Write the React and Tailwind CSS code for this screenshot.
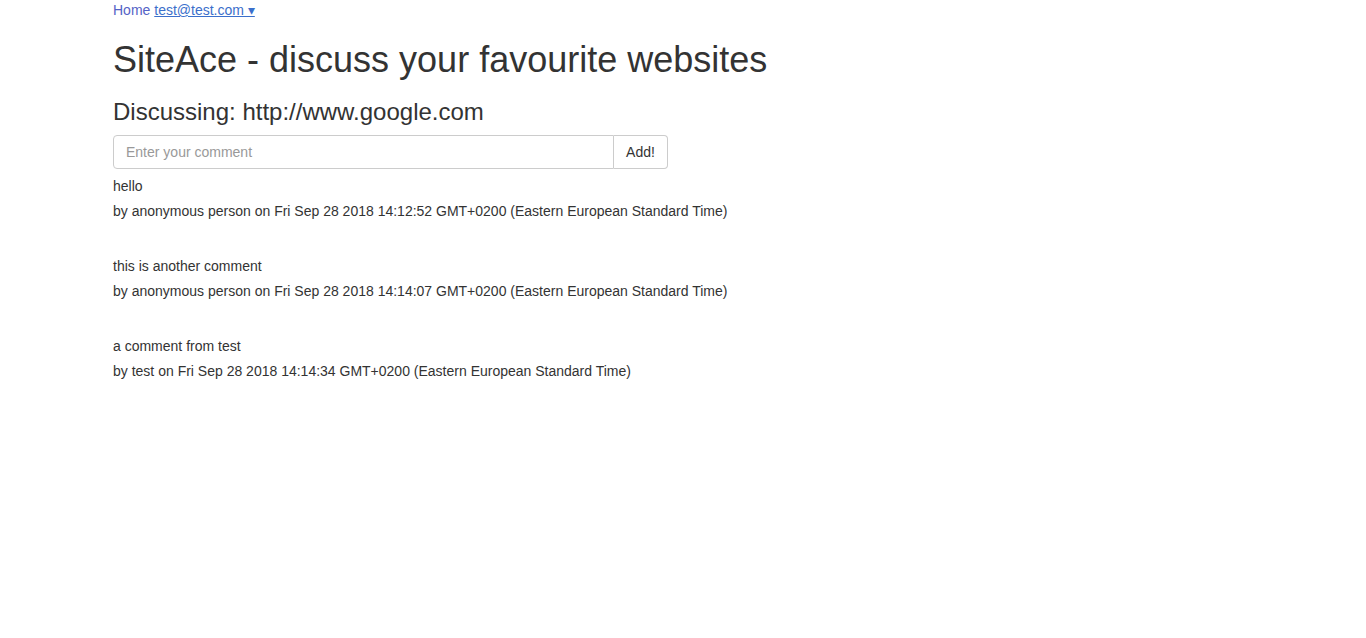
import React from "react";

const COMMENTS = [
  { text: "hello", by: "anonymous person", on: "Fri Sep 28 2018 14:12:52 GMT+0200 (Eastern European Standard Time)" },
  { text: "this is another comment", by: "anonymous person", on: "Fri Sep 28 2018 14:14:07 GMT+0200 (Eastern European Standard Time)" },
  { text: "a comment from test", by: "test", on: "Fri Sep 28 2018 14:14:34 GMT+0200 (Eastern European Standard Time)" },
];

export default function App() {
  return (
    <div className="min-h-screen bg-white text-[#333] text-[14px] leading-[20px]" style={{ fontFamily: '"Liberation Sans", Arial, sans-serif' }}>
      <div className="w-[1170px] mx-auto px-[15px]">
        {/* Nav */}
        <div className="h-[20px] text-[14px] leading-[20px]">
          <span className="text-[#5563c6]">Home</span>{" "}
          <span className="text-[#3b6fcb] underline">test@test.com ▾</span>
        </div>

        <h1 className="mt-[20px] text-[36px] leading-[39.6px] font-normal">SiteAce - discuss your favourite websites</h1>

        <h3 className="mt-[19px] mb-[10px] text-[24px] leading-[26.4px] font-normal">Discussing: http://www.google.com</h3>

        {/* Comment form */}
        <div className="flex w-[555px] h-[34px]">
          <input
            placeholder="Enter your comment"
            className="w-[501px] h-full border border-[#ccc] rounded-l-[4px] px-[12px] text-[14px] text-[#555] placeholder:text-[#999] outline-none"
          />
          <button className="w-[54px] h-full border border-l-0 border-[#ccc] rounded-r-[4px] bg-white text-[14px] text-[#333]">Add!</button>
        </div>

        {/* Comments */}
        <div className="mt-[7px]">
          {COMMENTS.map((c, i) => (
            <div key={i} className="mb-[35px]">
              <p className="mb-[5px]">{c.text}</p>
              <p>by {c.by} on {c.on}</p>
            </div>
          ))}
        </div>
      </div>
    </div>
  );
}
